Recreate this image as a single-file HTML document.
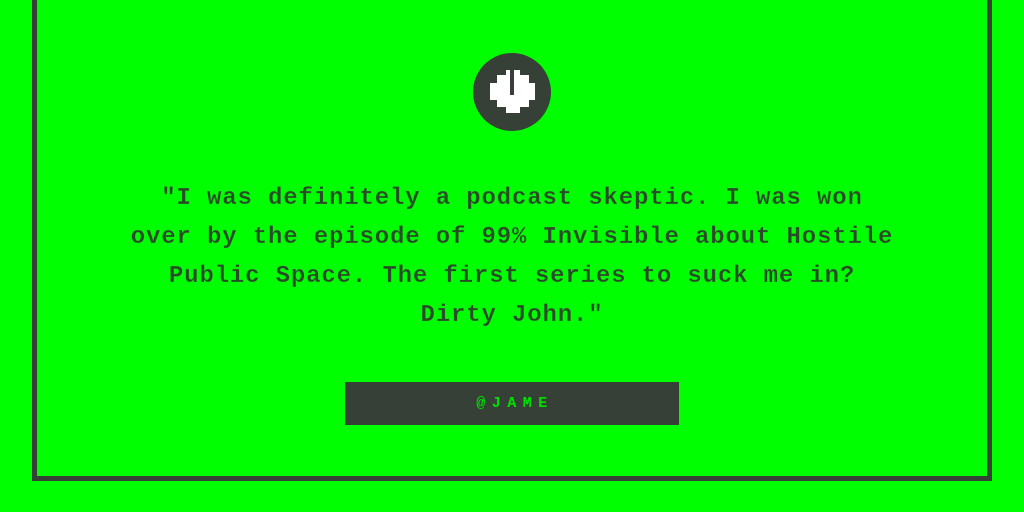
<!DOCTYPE html>
<html><head><style>
html,body{margin:0;padding:0;}
body{width:1024px;height:512px;background:#00ff00;position:relative;overflow:hidden;font-family:"Liberation Mono",monospace;}
.frame{position:absolute;left:32px;top:-10px;width:950px;height:481px;border:5px solid #364036;}
.q{position:absolute;left:0;width:1024px;top:179px;text-align:center;color:#2a4a2a;font-size:24px;font-weight:bold;line-height:39px;letter-spacing:0.85px;-webkit-text-stroke:0.2px #00ff00;}
.btn{position:absolute;left:345px;top:382px;width:334px;height:43px;background:#364036;color:#00e000;font-size:15px;font-weight:bold;letter-spacing:6.5px;text-align:center;line-height:44px;text-indent:6px;}
</style></head><body>
<div class="frame"></div>
<svg style="position:absolute;left:0;top:0" width="1024" height="200">
<circle cx="512" cy="92" r="39" fill="#364036"/>
<g fill="#fff">
<rect x="506" y="70" width="14" height="6"/>
<rect x="497" y="75" width="32" height="9"/>
<rect x="490" y="83" width="45" height="17"/>
<rect x="497" y="99" width="32" height="8"/>
<rect x="506" y="106" width="14" height="7"/>
</g>
<rect x="510" y="70" width="4" height="25" fill="#364036"/>
</svg>
<div class="q">"I was definitely a podcast skeptic. I was won<br>over by the episode of 99% Invisible about Hostile<br>Public Space. The first series to suck me in?<br>Dirty John."</div>
<div class="btn">@JAME</div>
</body></html>
